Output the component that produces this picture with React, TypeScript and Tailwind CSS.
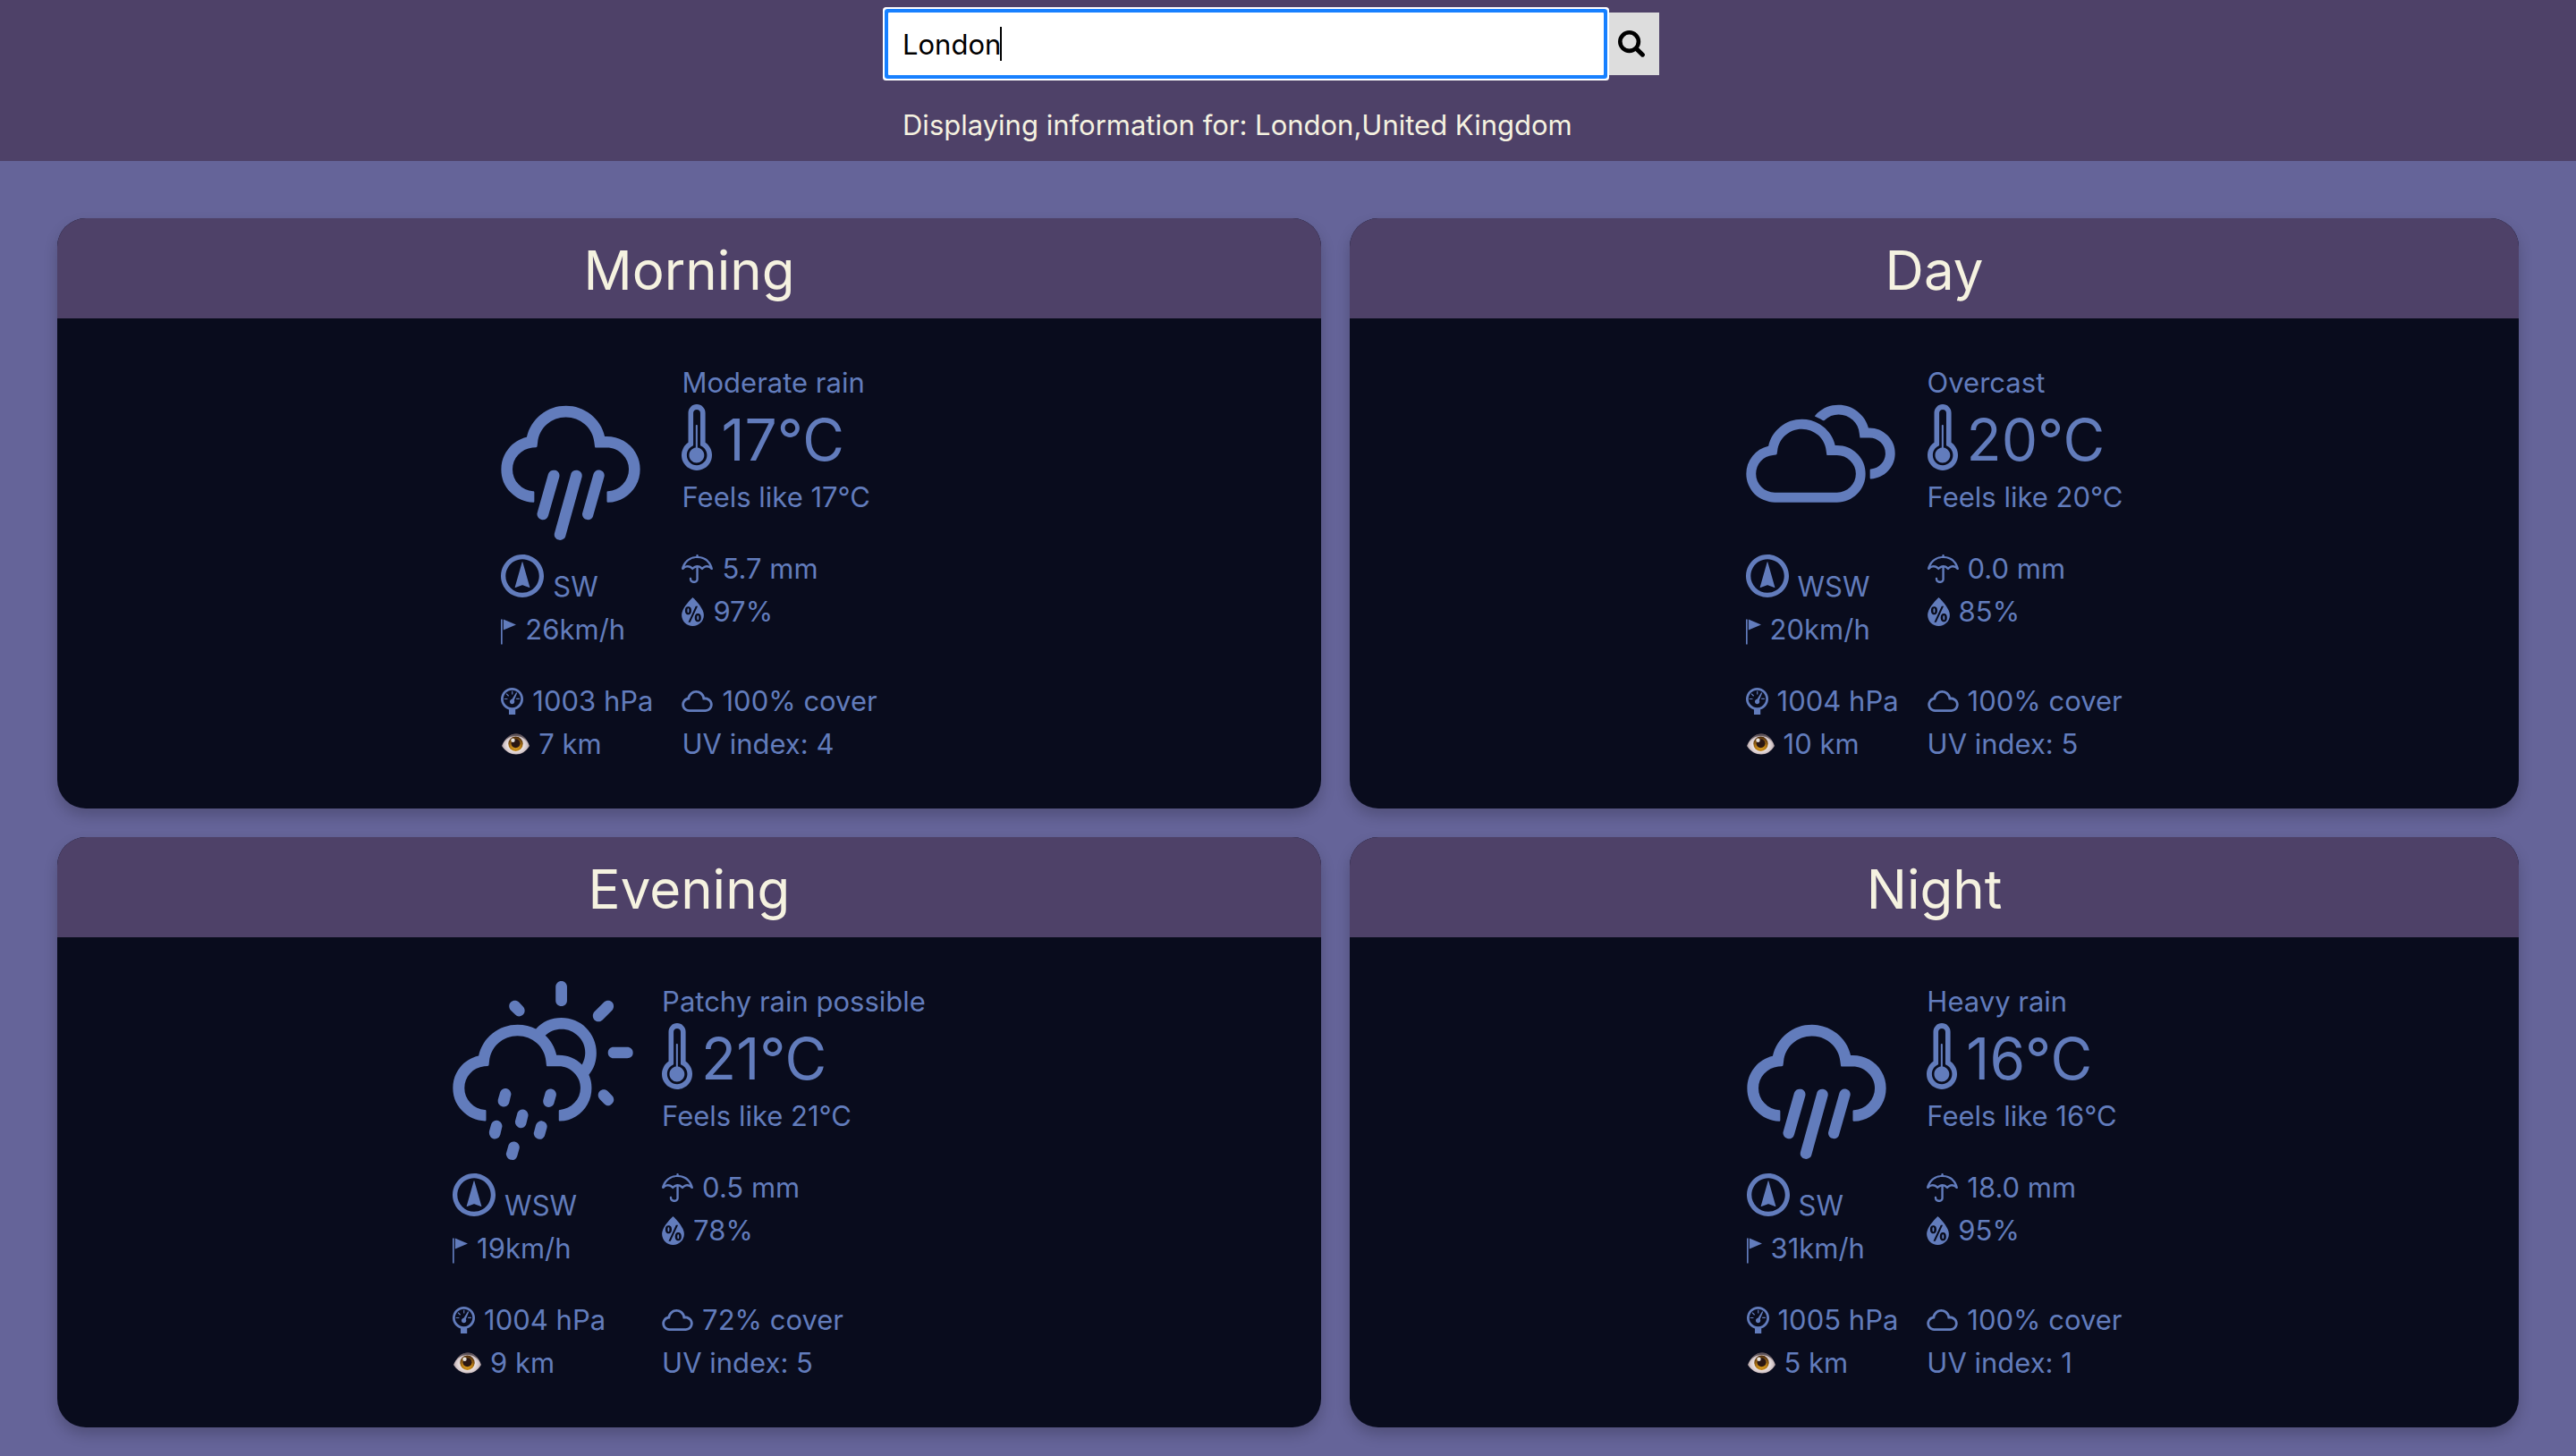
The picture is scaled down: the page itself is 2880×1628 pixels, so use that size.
import type { IconType } from "react-icons";
import {
  WiBarometer,
  WiCloud,
  WiCloudy,
  WiDayShowers,
  WiHumidity,
  WiRain,
  WiSmallCraftAdvisory,
  WiThermometer,
  WiUmbrella,
  WiWindDeg,
} from "react-icons/wi";

interface Sky {
  icon: IconType;
  viewBox: string;
  width: string;
}

interface Period {
  title: string;
  condition: string;
  sky: Sky;
  temp: number;
  rain: string;
  humidity: number;
  windDir: string;
  wind: number;
  pressure: number;
  visibility: number;
  cover: number;
  uv: number;
}

const rainSky: Sky = { icon: WiRain, viewBox: "4.64 0.8 20.73 23.5", width: "w-[156px]" };
const cloudySky: Sky = { icon: WiCloudy, viewBox: "3.89 0.8 22.21 23.5", width: "w-[167px]" };
const showersSky: Sky = { icon: WiDayShowers, viewBox: "1.56 0.8 26.88 23.5", width: "w-[202px]" };

const periods: Period[] = [
  { title: "Morning", condition: "Moderate rain", sky: rainSky, temp: 17, rain: "5.7", humidity: 97, windDir: "SW", wind: 26, pressure: 1003, visibility: 7, cover: 100, uv: 4 },
  { title: "Day", condition: "Overcast", sky: cloudySky, temp: 20, rain: "0.0", humidity: 85, windDir: "WSW", wind: 20, pressure: 1004, visibility: 10, cover: 100, uv: 5 },
  { title: "Evening", condition: "Patchy rain possible", sky: showersSky, temp: 21, rain: "0.5", humidity: 78, windDir: "WSW", wind: 19, pressure: 1004, visibility: 9, cover: 72, uv: 5 },
  { title: "Night", condition: "Heavy rain", sky: rainSky, temp: 16, rain: "18.0", humidity: 95, windDir: "SW", wind: 31, pressure: 1005, visibility: 5, cover: 100, uv: 1 },
];

function SearchIcon() {
  return (
    <svg viewBox="0 0 30 30" className="h-[30px] w-[30px]" fill="none" stroke="currentColor" aria-hidden="true">
      <circle cx="12.6" cy="12.6" r="10.3" strokeWidth="4.6" />
      <path d="M20.4 20.4 27.4 27.2" strokeWidth="5" strokeLinecap="round" />
    </svg>
  );
}

function EyeIcon() {
  return (
    <svg viewBox="0 0 32 24" className="h-6 w-8" aria-hidden="true">
      <defs>
        <radialGradient id="eye-white" cx="50%" cy="55%" r="55%">
          <stop offset="0.4" stopColor="#f7f0f0" />
          <stop offset="0.75" stopColor="#d3c6c8" />
          <stop offset="1" stopColor="#877479" />
        </radialGradient>
        <radialGradient id="eye-iris" cx="50%" cy="72%" r="65%">
          <stop offset="0" stopColor="#dba01f" />
          <stop offset="0.55" stopColor="#b57a17" />
          <stop offset="1" stopColor="#54320d" />
        </radialGradient>
      </defs>
      <path d="M1 14C5 5 10.500 0.500 17 0.500S28.500 5 32 14C28 20.500 23 23.500 17 23.500S5 20.500 1 14Z" fill="url(#eye-white)" />
      <path d="M3.500 9.500C7 3.500 11.500 0.500 17 0.500S26.500 3.500 29.500 9.500C26 5 21.500 3 16.500 3S7 5 3.500 9.500Z" fill="#4a4148" opacity="0.75" />
      <circle cx="16.500" cy="11.700" r="8.200" fill="url(#eye-iris)" />
      <circle cx="16.500" cy="11.200" r="5" fill="#2a1713" />
      <circle cx="13.500" cy="7.700" r="2.200" fill="#fff" opacity="0.85" />
    </svg>
  );
}

function WeatherCard({ p }: { p: Period }) {
  const SkyIcon = p.sky.icon;
  return (
    <section className="overflow-hidden rounded-[32px] bg-[#090c1d] shadow-[0_8px_16px_rgba(0,0,0,0.2)]">
      <h2 className="bg-[#4e4168] pt-2.5 pb-1.5 text-center text-[60px] leading-[96px] text-[#f5f2e0]">{p.title}</h2>
      <div className="grid grid-cols-[auto_auto] justify-center gap-8 py-12 text-[31px] leading-[48px] text-[#627cbc]">
        <div>
          <SkyIcon viewBox={p.sky.viewBox} className={`h-[176px] overflow-visible ${p.sky.width}`} />
        </div>
        <div>
          <p>{p.condition}</p>
          <div className="flex items-start gap-2.5">
            <WiThermometer viewBox="9.91 2.55 10.18 22.09" className="h-[74px] w-[34px]" />
            <span className="text-[64px] leading-[80px]">{p.temp}°C</span>
          </div>
          <p>Feels like {p.temp}°C</p>
        </div>

        <div>
          <div className="flex h-[68px] items-end gap-2.5">
            <WiWindDeg viewBox="3.74 3.22 22.52 22.52" className="mb-3 h-12 w-12" />
            <span>{p.windDir}</span>
          </div>
          <div className="flex items-center gap-2.5">
            <WiSmallCraftAdvisory viewBox="9.81 5.05 10.38 19.55" className="h-[33px] w-[17px]" />
            <span>{p.wind}km/h</span>
          </div>
        </div>
        <div>
          <div className="flex items-center gap-2.5">
            <WiUmbrella viewBox="4.64 5.52 20.75 19.04" className="h-8 w-[35px]" />
            <span>{p.rain} mm</span>
          </div>
          <div className="flex items-center gap-2.5">
            <WiHumidity viewBox="7.56 5.46 14.82 19.13" className="h-8 w-[25px]" />
            <span>{p.humidity}%</span>
          </div>
        </div>

        <div>
          <div className="flex items-center gap-2.5">
            <WiBarometer viewBox="7.69 5.88 14.65 17.56" className="h-[30px] w-[25px]" />
            <span>{p.pressure} hPa</span>
          </div>
          <div className="flex items-center gap-2.5">
            <EyeIcon />
            <span>{p.visibility} km</span>
          </div>
        </div>
        <div>
          <div className="flex items-center gap-2.5">
            <WiCloud viewBox="4.61 7.39 20.78 14.46" className="h-6 w-[35px]" />
            <span>{p.cover}% cover</span>
          </div>
          <p>UV index: {p.uv}</p>
        </div>
      </div>
    </section>
  );
}

export default function App() {
  return (
    <div className="min-h-screen bg-[#656499] font-['Inter',sans-serif]">
      <header className="bg-[#4e4168] pt-[14px] pb-4">
        <div className="mx-auto w-full max-w-[894px] pr-8">
          <form className="flex h-[70px]" onSubmit={(e) => e.preventDefault()}>
            <div className="relative z-10 min-w-0 flex-1">
              <input
                type="text"
                aria-label="City"
                defaultValue="London"
                className="h-full w-full rounded-[1px] bg-white px-4 text-[31px] text-black caret-transparent shadow-[0_0_0_4px_#1780ff,0_0_0_6px_#ffffff] outline-none"
              />
              <span className="pointer-events-none absolute top-4 left-[125px] h-[38px] w-0.5 bg-black" />
            </div>
            <button type="submit" aria-label="Search" className="flex w-[62px] items-center justify-center bg-[#dddddd] text-black">
              <SearchIcon />
            </button>
          </form>
          <p className="mt-8 pl-4 text-[31px] leading-[48px] text-[#f5f2e0]">Displaying information for: London,United Kingdom</p>
        </div>
      </header>
      <main className="grid grid-cols-[1413fr_1307fr] gap-8 px-16 pt-16 pb-8">
        {periods.map((p) => (
          <WeatherCard key={p.title} p={p} />
        ))}
      </main>
    </div>
  );
}
